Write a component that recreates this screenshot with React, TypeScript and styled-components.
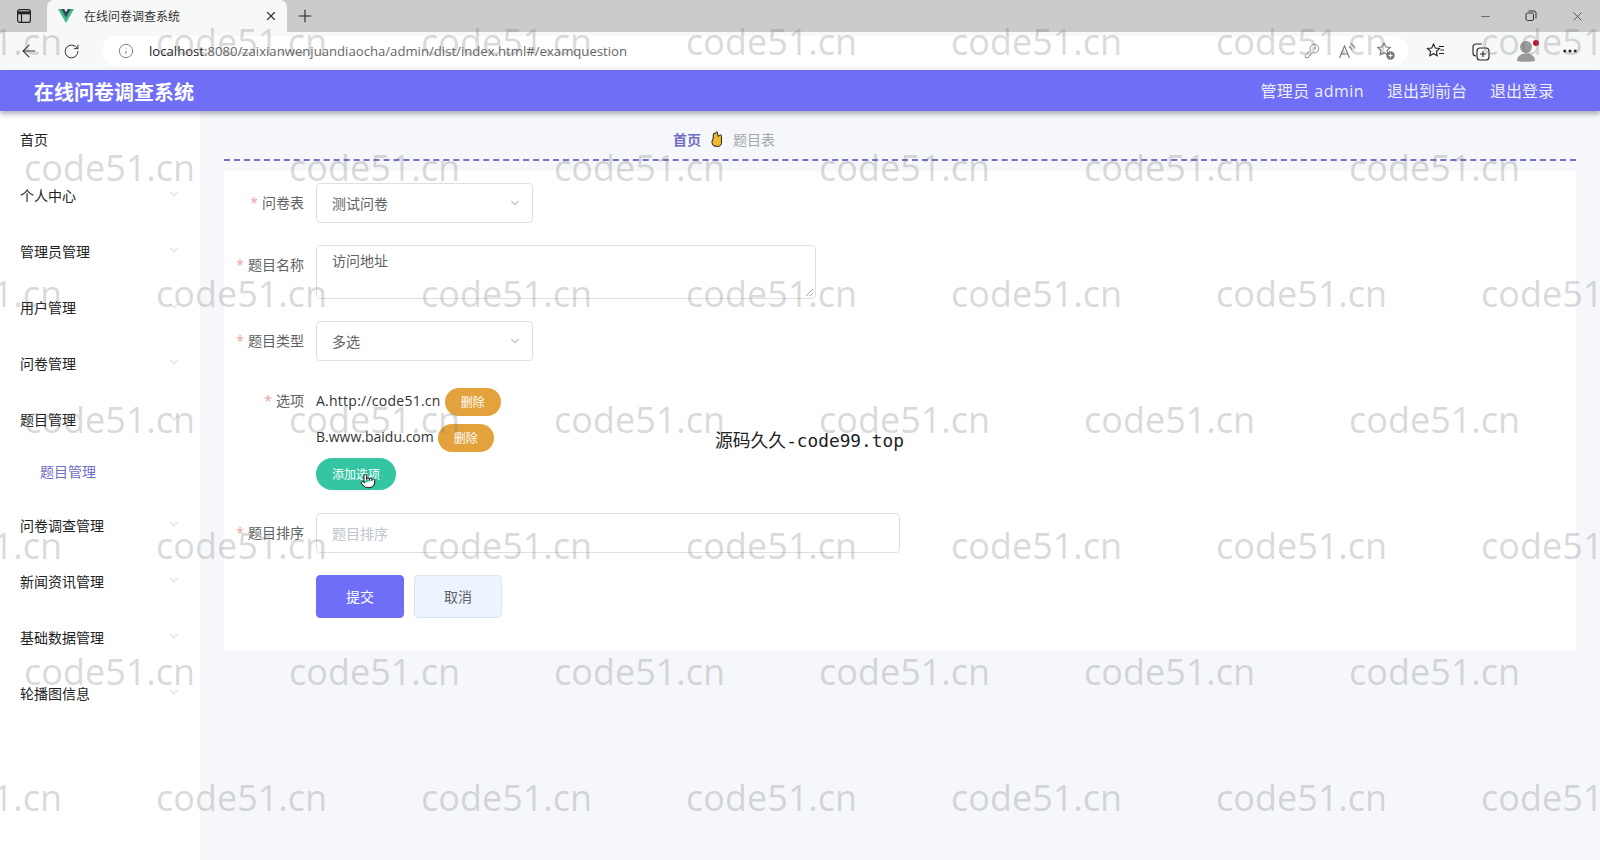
import React from 'react';
import styled, { createGlobalStyle } from 'styled-components';
import { ArrowLeft, ChevronDown, Info, KeyRound, Minus, MoreHorizontal, Plus, Pointer, RotateCw, X } from 'lucide-react';

const GlobalStyle = createGlobalStyle`
  html, body {
    margin: 0;
    padding: 0;
    width: 1600px;
    height: 860px;
    overflow: hidden;
    background: #fff;
    font-family: "Open Sans", "Noto Sans CJK SC", sans-serif;
  }
  * { box-sizing: border-box; }
`;

const Page = styled.div`
  position: relative;
  width: 1600px;
  height: 860px;
  display: flex;
  flex-direction: column;
  overflow: hidden;
`;

const TabStrip = styled.div`
  height: 32px;
  background: #cbcbcb;
  display: flex;
  align-items: flex-end;
  padding-left: 16px;
  flex: none;
`;

const TabActions = styled.div`
  width: 31px;
  height: 32px;
  display: flex;
  align-items: center;
  color: #222;
`;

const Tab = styled.div`
  width: 240px;
  height: 32px;
  background: #f7f8f8;
  border-radius: 7px 7px 0 0;
  display: flex;
  align-items: center;
  padding: 0 9px 0 11px;
  gap: 10px;
  font-size: 12px;
  color: #333;
`;

const TabTitle = styled.span`
  flex: 1;
`;

const NewTab = styled.div`
  width: 36px;
  height: 32px;
  display: flex;
  align-items: center;
  justify-content: center;
  color: #222;
`;

const WindowButtons = styled.div`
  margin-left: auto;
  height: 32px;
  display: flex;
  align-items: center;
  gap: 33px;
  padding-right: 15px;
  color: #333;
`;

const Toolbar = styled.div`
  height: 38px;
  background: #f7f8f8;
  display: flex;
  align-items: center;
  flex: none;
  padding-left: 8px;
`;

const NavButton = styled.div`
  width: 42px;
  display: flex;
  align-items: center;
  justify-content: center;
  color: #333;
`;

const AddressBar = styled.div`
  width: 1306px;
  height: 30px;
  margin-left: 10px;
  background: #fff;
  border-radius: 15px;
  display: flex;
  align-items: center;
  padding: 0 12px 0 16px;
  color: #666;
`;

const Url = styled.span`
  margin-left: 15px;
  font-size: 13.15px;
  color: #666;
  flex: 1;
`;

const UrlHost = styled.span`
  color: #222;
`;

const AddressIcons = styled.div`
  display: flex;
  align-items: center;
  gap: 18px;
  color: #777;
`;

const ToolIcons = styled.div`
  display: flex;
  align-items: center;
  margin-left: 18px;
  gap: 25px;
  color: #222;
`;

const Header = styled.header`
  height: 41px;
  background: #6f6ef7;
  display: flex;
  align-items: center;
  justify-content: space-between;
  padding: 0 46px 0 34px;
  color: #fff;
  box-shadow: 0 3px 5px rgba(60, 60, 90, 0.4);
  position: relative;
  flex: none;
`;

const Brand = styled.div`
  font-size: 20px;
  font-weight: 700;
  padding-top: 1px;
`;

const HeaderLinks = styled.div`
  display: flex;
  gap: 23px;
  font-size: 16px;
  color: #eeeeff;
  padding-bottom: 1px;
`;

const AccountName = styled.span`
  letter-spacing: 0.45px;
`;

const Body = styled.div`
  flex: 1;
  display: flex;
  min-height: 0;
`;

const Sidebar = styled.aside`
  width: 200px;
  background: #fff;
  flex: none;
`;

const MenuItem = styled.div<{ $sub?: boolean }>`
  height: ${(p) => (p.$sub ? 48 : 56)}px;
  margin-bottom: ${(p) => (p.$sub ? 2 : 0)}px;
  display: flex;
  align-items: center;
  justify-content: space-between;
  padding: 0 19px 0 ${(p) => (p.$sub ? 40 : 20)}px;
  font-size: 14px;
  color: ${(p) => (p.$sub ? '#6f6ec8' : '#222')};
`;

const MenuArrow = styled(ChevronDown)`
  color: #e2e2e2;
  margin-top: -3px;
`;

const Main = styled.main`
  flex: 1;
  background: #f5f7fa;
  padding: 0 24px;
`;

const Breadcrumb = styled.div`
  height: 50px;
  border-bottom: 2px dashed #7a6fc9;
  display: flex;
  align-items: center;
  font-size: 14px;
  gap: 10px;
  padding-left: 449px;
  padding-top: 8px;
  margin-bottom: 10px;
`;

const CrumbHome = styled.span`
  font-weight: 700;
  color: #6f6ec0;
`;

const CrumbCurrent = styled.span`
  color: #a3a8b0;
`;

const Card = styled.section`
  background: #fff;
  padding: 12px 0 33px;
  display: flex;
  flex-direction: column;
`;

const FormRow = styled.div<{ $gap: number }>`
  display: flex;
  align-items: flex-start;
  margin-bottom: ${(p) => p.$gap}px;
`;

const Label = styled.label<{ $lh?: number }>`
  width: 92px;
  flex: none;
  padding-right: 12px;
  text-align: right;
  font-size: 14px;
  line-height: ${(p) => p.$lh ?? 39}px;
  color: #606266;
  white-space: nowrap;
`;

const Star = styled.span`
  color: #f0a0a0;
  margin-right: 4px;
`;

const SelectBox = styled.div`
  width: 217px;
  height: 40px;
  border: 1px solid #dcdfe6;
  border-radius: 4px;
  display: flex;
  align-items: center;
  justify-content: space-between;
  padding: 0 10px 1px 15px;
  font-size: 14px;
  color: #606266;
  background: #fff;
`;

const SelectArrow = styled(ChevronDown)`
  color: #c0c4cc;
`;

const TextArea = styled.div`
  position: relative;
  width: 500px;
  height: 54px;
  border: 1px solid #dcdfe6;
  border-radius: 4px;
  padding: 4px 15px;
  font-size: 14px;
  line-height: 22px;
  color: #606266;
`;

const ResizeGrip = styled.svg`
  position: absolute;
  right: 1px;
  bottom: 1px;
`;

const InputBox = styled.div`
  width: 584px;
  height: 40px;
  border: 1px solid #dcdfe6;
  border-radius: 4px;
  display: flex;
  align-items: center;
  padding: 0 15px 1px;
  font-size: 14px;
  color: #c0c4cc;
`;

const OptionList = styled.div`
  display: flex;
  flex-direction: column;
  align-items: flex-start;
`;

const OptionLine = styled.div`
  display: flex;
  align-items: center;
  gap: 4px;
  height: 28px;
  margin-bottom: 8px;
  font-size: 14px;
  color: #333;
`;

const OptionText = styled.span<{ $track?: number }>`
  letter-spacing: ${(p) => p.$track ?? 0}px;
  margin-bottom: 3px;
`;

const Pill = styled.button<{ $color: string; $w: number; $h: number }>`
  width: ${(p) => p.$w}px;
  height: ${(p) => p.$h}px;
  border: 0;
  border-radius: ${(p) => p.$h / 2}px;
  background: ${(p) => p.$color};
  color: #fff;
  font-family: inherit;
  font-size: 12px;
  padding: 0 0 1px;
`;

const AddWrap = styled.div`
  position: relative;
  margin-top: -2px;
`;

const HandCursor = styled(Pointer)`
  position: absolute;
  left: 44px;
  top: 15px;
  color: #111;
  fill: #fff;
`;

const Actions = styled.div`
  display: flex;
  gap: 10px;
  margin-left: 92px;
`;

const ActionButton = styled.button<{ $primary?: boolean }>`
  width: 88px;
  height: 43px;
  border-radius: 4px;
  border: 1px solid ${(p) => (p.$primary ? '#6f6ef7' : '#dfe6ee')};
  background: ${(p) => (p.$primary ? '#6f6ef7' : '#ecf5ff')};
  color: ${(p) => (p.$primary ? '#fff' : '#606266')};
  font-family: inherit;
  font-size: 14px;
  padding: 0 0 2px;
`;

const Watermarks = styled.div`
  position: absolute;
  inset: 0;
  pointer-events: none;
  padding-top: 17px;
  overflow: hidden;
`;

const WatermarkRow = styled.div<{ $shift: boolean }>`
  height: 126px;
  display: flex;
  margin-left: ${(p) => (p.$shift ? 24 : -109)}px;
`;

const WatermarkText = styled.span`
  flex: none;
  width: 265px;
  height: 50px;
  line-height: 50px;
  font-size: 36px;
  color: rgba(110, 110, 110, 0.27);
  white-space: nowrap;
  font-family: "Open Sans", sans-serif;
`;

const Stamp = styled.div`
  position: absolute;
  left: 715px;
  top: 429px;
  font-size: 17.8px;
  line-height: 24px;
  color: #222;
  font-family: "DejaVu Sans Mono", "Noto Sans CJK SC", monospace;
  white-space: nowrap;
`;

const Avatar = styled.div`
  position: relative;
  width: 20px;
  height: 22px;
`;

const AvatarDot = styled.span`
  position: absolute;
  right: -3px;
  top: 0;
  width: 6px;
  height: 6px;
  border-radius: 50%;
  background: #c8102e;
`;

const VueLogo = () => (
  <svg width="16" height="14" viewBox="0 0 256 221">
    <path d="M204.8 0H256L128 220.8 0 0h97.92L128 51.2 157.44 0z" fill="#41b883" />
    <path d="M50.56 0 128 133.12 204.8 0h-47.36L128 51.2 97.92 0z" fill="#35495e" />
  </svg>
);

const TabsIcon = () => (
  <svg width="16" height="16" viewBox="0 0 16 16" fill="none" stroke="currentColor" strokeWidth="1.2">
    <rect x="1.6" y="1.6" width="12.8" height="12.8" rx="2.2" />
    <path d="M2 4.8h12" strokeWidth="3" />
    <path d="M5.5 5v9" />
  </svg>
);

const RestoreIcon = () => (
  <svg width="12" height="12" viewBox="0 0 12 12" fill="none" stroke="currentColor" strokeWidth="1">
    <rect x="1" y="3" width="7.5" height="7.5" rx="1.5" />
    <path d="M3.5 1h5.5a2 2 0 0 1 2 2v5.5" />
  </svg>
);

const ReadAloudIcon = () => (
  <svg width="20" height="18" viewBox="0 0 20 18" fill="none" stroke="currentColor" strokeWidth="1.1">
    <path d="M1.5 16 6.5 4l5 12M3.2 12h6.6" />
    <path d="M11 4.5c1.4.7 2.4 1.8 3 3.2M12.5 1.5c2.2 1 3.8 2.7 4.7 5" />
  </svg>
);

const FavAddIcon = () => (
  <svg width="20" height="20" viewBox="0 0 20 20" fill="none" stroke="currentColor" strokeWidth="1.1">
    <path d="m8 2 1.9 4 4.3.5-3.2 3 .9 4.3L8 11.7 4.1 13.8 5 9.5 1.8 6.5 6.1 6z" />
    <circle cx="14.5" cy="14.5" r="4.2" fill="#777" stroke="none" />
    <path d="M14.5 12.5v4M12.5 14.5h4" stroke="#fff" />
  </svg>
);

const FavoritesIcon = () => (
  <svg width="20" height="18" viewBox="0 0 20 18" fill="none" stroke="currentColor" strokeWidth="1.1">
    <path d="m7.5 2 1.8 4 4.2.5-3.1 3 .8 4.3-3.7-2.1-3.7 2.1.8-4.3-3.1-3L5.700 6z" />
    <path d="M13 4.500h5M14.500 8h3.500M13 11.500h5" />
  </svg>
);

const CollectionsIcon = () => (
  <svg width="20" height="19" viewBox="0 0 20 19" fill="none" stroke="currentColor" strokeWidth="1.1">
    <path d="M5 14c-2 0-3-1-3-3V5c0-2 1-3 3-3h6" />
    <rect x="6" y="6" width="12" height="12" rx="3" />
    <path d="M12 9v6M9 12h6" />
  </svg>
);

const ProfileIcon = () => (
  <svg width="20" height="22" viewBox="0 0 20 22" fill="#9a9a9a">
    <circle cx="10" cy="7" r="6" />
    <path d="M1 21c0-5 4-7.500 9-7.500s9 2.500 9 7.500c-2 1-16 1-18 0z" />
  </svg>
);

const HandIcon = () => (
  <svg width="12" height="16" viewBox="0 0 12 16">
    <path
      d="M3 15c-1.500-1-2.200-3-2-5l1-2 .5-5c0-1 1.300-1 1.500 0L5 1.500c.2-1 1.500-1 1.500 0l.5 4 2-1.500c1-.5 1.800.3 1.500 1.300L10.500 11c0 2.500-1 4-3 4.500z"
      fill="#f0b72f"
      stroke="#222"
      strokeWidth="1"
    />
  </svg>
);

const menu: { label: string; arrow?: boolean; sub?: boolean }[] = [
  { label: '首页' },
  { label: '个人中心', arrow: true },
  { label: '管理员管理', arrow: true },
  { label: '用户管理', arrow: true },
  { label: '问卷管理', arrow: true },
  { label: '题目管理', arrow: true },
  { label: '题目管理', sub: true },
  { label: '问卷调查管理', arrow: true },
  { label: '新闻资讯管理', arrow: true },
  { label: '基础数据管理', arrow: true },
  { label: '轮播图信息', arrow: true },
];

const App = () => {
  return (
    <Page>
      <GlobalStyle />
      <TabStrip>
        <TabActions>
          <TabsIcon />
        </TabActions>
        <Tab>
          <VueLogo />
          <TabTitle>在线问卷调查系统</TabTitle>
          <X size={14} />
        </Tab>
        <NewTab>
          <Plus size={20} strokeWidth={1.3} />
        </NewTab>
        <WindowButtons>
          <Minus size={13} strokeWidth={1.2} />
          <RestoreIcon />
          <X size={15} strokeWidth={1.2} />
        </WindowButtons>
      </TabStrip>

      <Toolbar>
        <NavButton>
          <ArrowLeft size={20} strokeWidth={1.3} />
        </NavButton>
        <NavButton>
          <RotateCw size={17} strokeWidth={1.4} />
        </NavButton>
        <AddressBar>
          <Info size={16} strokeWidth={1.2} />
          <Url>
            <UrlHost>localhost</UrlHost>:8080/zaixianwenjuandiaocha/admin/dist/index.html#/examquestion
          </Url>
          <AddressIcons>
            <KeyRound size={16} strokeWidth={1.2} />
            <ReadAloudIcon />
            <FavAddIcon />
          </AddressIcons>
        </AddressBar>
        <ToolIcons>
          <FavoritesIcon />
          <CollectionsIcon />
          <Avatar>
            <ProfileIcon />
            <AvatarDot />
          </Avatar>
          <MoreHorizontal size={18} />
        </ToolIcons>
      </Toolbar>

      <Header>
        <Brand>在线问卷调查系统</Brand>
        <HeaderLinks>
          <AccountName>管理员 admin</AccountName>
          <span>退出到前台</span>
          <span>退出登录</span>
        </HeaderLinks>
      </Header>

      <Body>
        <Sidebar>
          {menu.map((item, i) => (
            <MenuItem key={i} $sub={item.sub}>
              <span>{item.label}</span>
              {item.arrow && <MenuArrow size={14} />}
            </MenuItem>
          ))}
        </Sidebar>

        <Main>
          <Breadcrumb>
            <CrumbHome>首页</CrumbHome>
            <HandIcon />
            <CrumbCurrent>题目表</CrumbCurrent>
          </Breadcrumb>
          <Card>
            <FormRow $gap={22}>
              <Label><Star>*</Star>问卷表</Label>
              <SelectBox>
                测试问卷
                <SelectArrow size={14} />
              </SelectBox>
            </FormRow>
            <FormRow $gap={22}>
              <Label><Star>*</Star>题目名称</Label>
              <TextArea>
                访问地址
                <ResizeGrip width="9" height="9" viewBox="0 0 9 9" stroke="#888" strokeWidth="0.8">
                  <path d="M1 8 8 1M5 8l3-3" />
                </ResizeGrip>
              </TextArea>
            </FormRow>
            <FormRow $gap={27}>
              <Label><Star>*</Star>题目类型</Label>
              <SelectBox>
                多选
                <SelectArrow size={14} />
              </SelectBox>
            </FormRow>
            <FormRow $gap={23}>
              <Label $lh={26}><Star>*</Star>选项</Label>
              <OptionList>
                <OptionLine>
                  <OptionText $track={0.25}>A.http://code51.cn</OptionText>
                  <Pill $color="#e3a23c" $w={56} $h={28}>删除</Pill>
                </OptionLine>
                <OptionLine>
                  <OptionText>B.www.baidu.com</OptionText>
                  <Pill $color="#e3a23c" $w={56} $h={28}>删除</Pill>
                </OptionLine>
                <AddWrap>
                  <Pill $color="#34c6a2" $w={80} $h={32}>添加选项</Pill>
                  <HandCursor size={16} strokeWidth={1.5} />
                </AddWrap>
              </OptionList>
            </FormRow>
            <FormRow $gap={22}>
              <Label><Star>*</Star>题目排序</Label>
              <InputBox>题目排序</InputBox>
            </FormRow>
            <Actions>
              <ActionButton $primary>提交</ActionButton>
              <ActionButton>取消</ActionButton>
            </Actions>
          </Card>
        </Main>
      </Body>

      <Stamp>源码久久-code99.top</Stamp>

      <Watermarks>
        {[0, 1, 2, 3, 4, 5, 6].map((row) => (
          <WatermarkRow key={row} $shift={row % 2 === 1}>
            {[0, 1, 2, 3, 4, 5, 6, 7].map((col) => (
              <WatermarkText key={col}>code51.cn</WatermarkText>
            ))}
          </WatermarkRow>
        ))}
      </Watermarks>
    </Page>
  );
};

export default App;
